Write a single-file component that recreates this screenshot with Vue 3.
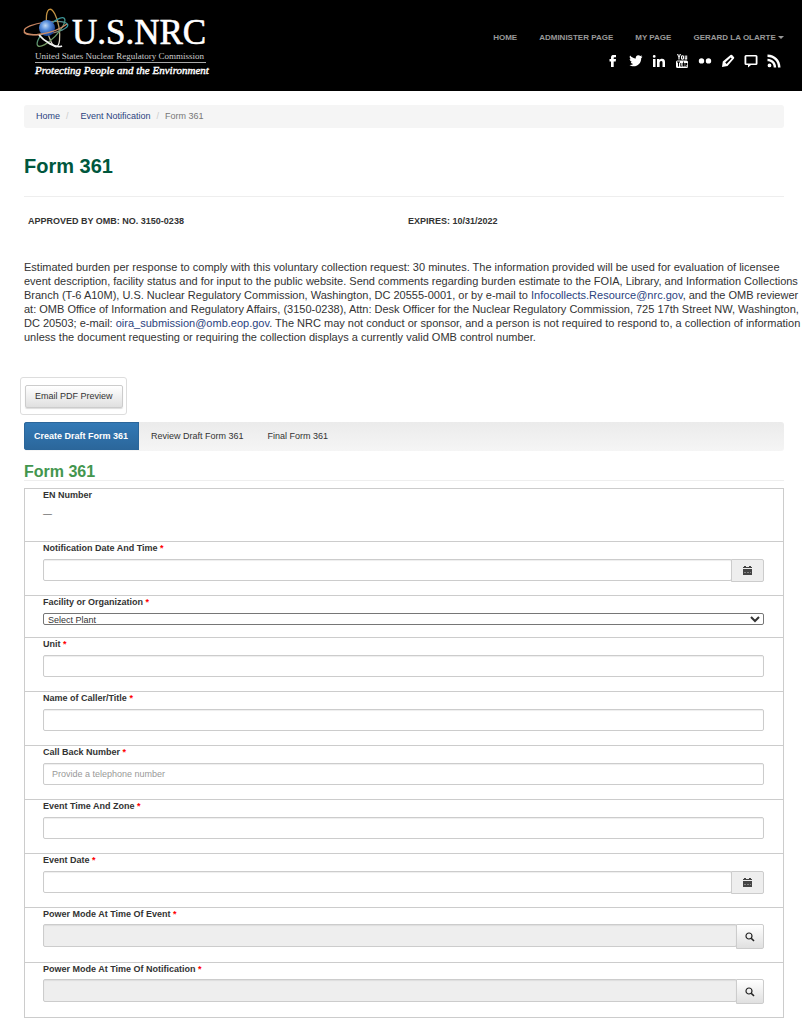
<template>
<header class="header">
  <a href="#" class="logo" aria-label="U.S.NRC home">
    <svg width="196" height="74" viewBox="0 0 196 74">
      <defs>
        <radialGradient id="globe" cx="0.4" cy="0.35" r="0.7">
          <stop offset="0" stop-color="#c3dbf7" />
          <stop offset="0.4" stop-color="#5a90dc" />
          <stop offset="1" stop-color="#12398c" />
        </radialGradient>
        <linearGradient id="orbitWide" x1="0" y1="0" x2="1" y2="0">
          <stop offset="0" stop-color="#d08a62" />
          <stop offset="0.6" stop-color="#a5705a" />
          <stop offset="1" stop-color="#2f9aa8" />
        </linearGradient>
        <linearGradient id="orbitTall" x1="0" y1="0" x2="0" y2="1">
          <stop offset="0" stop-color="#c9923a" />
          <stop offset="0.6" stop-color="#b09a6c" />
          <stop offset="1" stop-color="#f2f2f2" />
        </linearGradient>
        <linearGradient id="orbitTilt" x1="1" y1="0" x2="0" y2="1">
          <stop offset="0" stop-color="#2a93a6" />
          <stop offset="1" stop-color="#7f9a55" />
        </linearGradient>
      </defs>
      <g fill="none" stroke-width="1.3">
        <ellipse cx="30" cy="20" rx="22" ry="6" transform="rotate(-8 30 20)" stroke="url(#orbitWide)" />
        <ellipse cx="37" cy="20" rx="6" ry="19" transform="rotate(-10 37 20)" stroke="url(#orbitTall)" />
        <ellipse cx="35" cy="24" rx="19" ry="6" transform="rotate(-46 35 24)" stroke="url(#orbitTilt)" />
      </g>
      <circle cx="31" cy="20" r="8" fill="url(#globe)" />
      <g fill="none" stroke-width="1.3">
        <path d="M8 24 C11 30 38 26 51 16" stroke="#c98a66" />
        <path d="M23 27 C28 33 40 41 46 38" stroke="#f2f2f2" stroke-width="1.8" />
      </g>
      <text x="56" y="36" class="logo-name">U.S.NRC</text>
      <text x="19" y="51" class="logo-full">United States Nuclear Regulatory Commission</text>
      <path d="M19 54.500H190" stroke="#aaa" />
      <text x="19" y="66" class="logo-motto">Protecting People and the Environment</text>
    </svg>
  </a>
  <div class="header-right">
    <nav class="menu">
      <a href="#">HOME</a>
      <a href="#">ADMINISTER PAGE</a>
      <a href="#">MY PAGE</a>
      <a href="#">GERARD LA OLARTE <span class="caret"></span></a>
    </nav>
    <div class="social">
      <a v-for="icon in socialIcons" :key="icon.name" href="#" :aria-label="icon.name">
        <svg width="14" height="14" viewBox="0 0 14 14">
          <path :d="icon.d" fill="#fff" fill-rule="evenodd" />
        </svg>
      </a>
    </div>
  </div>
</header>

<main class="page">
  <nav class="breadcrumb">
    <a href="#">Home</a><span class="sep">/</span>
    <a href="#" class="second">Event Notification</a><span class="sep">/</span>
    <span class="current">Form 361</span>
  </nav>

  <h1>Form 361</h1>

  <div class="approval">
    <div>APPROVED BY OMB: NO. 3150-0238</div>
    <div>EXPIRES: 10/31/2022</div>
  </div>

  <p class="burden">
    Estimated burden per response to comply with this voluntary collection request: 30 minutes. The information provided will be used for evaluation of licensee event description, facility status and for input to the public website. Send comments regarding burden estimate to the FOIA, Library, and Information Collections Branch (T-6 A10M), U.S. Nuclear Regulatory Commission, Washington, DC 20555-0001, or by e-mail to <a href="mailto:Infocollects.Resource@nrc.gov">Infocollects.Resource@nrc.gov</a>, and the OMB reviewer at: OMB Office of Information and Regulatory Affairs, (3150-0238), Attn: Desk Officer for the Nuclear Regulatory Commission, 725 17th Street NW, Washington, DC 20503; e-mail: <a href="mailto:oira_submission@omb.eop.gov">oira_submission@omb.eop.gov</a>. The NRC may not conduct or sponsor, and a person is not required to respond to, a collection of information unless the document requesting or requiring the collection displays a currently valid OMB control number.
  </p>

  <div class="preview">
    <button type="button" class="btn">Email PDF Preview</button>
  </div>

  <div class="tabs">
    <button v-for="tab in tabs" :key="tab" type="button" :class="{ active: tab === activeTab }" @click="activeTab = tab">{{ tab }}</button>
  </div>

  <h2>Form 361</h2>

  <form class="fields" @submit.prevent>
    <div v-for="field in fields" :key="field.id" class="row" :class="field.type">
      <label :for="field.id">{{ field.label }} <span v-if="field.type !== 'static'" class="required">*</span></label>

      <output v-if="field.type === 'static'" :id="field.id">—</output>

      <select v-else-if="field.type === 'select'" :id="field.id" v-model="field.value">
        <option value="">Select Plant</option>
      </select>

      <div v-else class="group">
        <input :id="field.id" v-model="field.value" type="text" :placeholder="field.placeholder" :readonly="field.type === 'lookup'">
        <button v-if="field.type === 'date'" type="button" class="calendar" aria-label="Choose a date">
          <svg width="9" height="9" viewBox="0 0 9 9">
            <path d="M1 0h2v1h3V0h2v1h1v1H0V1h1z M0 3h9v6H0z" fill="#444" />
            <path d="M1 6.500h7" stroke="#888" stroke-dasharray="2 1" />
          </svg>
        </button>
        <button v-if="field.type === 'lookup'" type="button" class="search" aria-label="Launch lookup">
          <svg width="10" height="10" viewBox="0 0 10 10" fill="none" stroke="#222">
            <circle cx="4" cy="4" r="3" stroke-width="1.2" />
            <path d="M6.200 6.200L9 9" stroke-width="1.6" />
          </svg>
        </button>
      </div>
    </div>
  </form>
</main>
</template>

<script setup>
import { ref } from 'vue'

const tabs = ['Create Draft Form 361', 'Review Draft Form 361', 'Final Form 361']
const activeTab = ref(tabs[0])

const fields = ref([
  { id: 'en-number', type: 'static', label: 'EN Number' },
  { id: 'notification-date', type: 'date', label: 'Notification Date And Time', value: '' },
  { id: 'facility', type: 'select', label: 'Facility or Organization', value: '' },
  { id: 'unit', type: 'text', label: 'Unit', value: '' },
  { id: 'caller', type: 'text', label: 'Name of Caller/Title', value: '' },
  { id: 'call-back', type: 'text', label: 'Call Back Number', value: '', placeholder: 'Provide a telephone number' },
  { id: 'event-time', type: 'text', label: 'Event Time And Zone', value: '' },
  { id: 'event-date', type: 'date', label: 'Event Date', value: '' },
  { id: 'power-event', type: 'lookup', label: 'Power Mode At Time Of Event', value: '' },
  { id: 'power-notification', type: 'lookup', label: 'Power Mode At Time Of Notification', value: '' },
])

const socialIcons = [
  { name: 'Facebook', d: 'M5 13V7.500H3.500V5H5V3.500C5 1.600 6.200 1 7.600 1H10V3.200H8.500C7.900 3.200 7.700 3.500 7.700 4V5H10L9.700 7.500H7.700V13z' },
  { name: 'Twitter', d: 'M13.500 2.800L12.200 4.200C12.300 9 8.800 12.300 4.700 12.300C3 12.300 1.600 11.800.5 11C2 11.100 3.300 10.700 4.300 9.900C3 9.800 2.100 9 1.800 7.900H3C1.600 7.500.7 6.400.7 5L1.900 5.300C.7 4.400.3 2.900 1.100 1.600C2.600 3.400 4.500 4.400 6.800 4.500C6.400 2.700 7.600 1.200 9.300 1.200C10.200 1.200 10.800 1.500 11.300 2.100L13 1.500L12.300 2.900z' },
  { name: 'LinkedIn', d: 'M1 5H3.500V13H1z M2.250 1A1.400 1.400 0 1 1 2.200 3.800A1.400 1.400 0 0 1 2.250 1z M5 5H7.500V6.100C8.100 5.200 8.900 4.800 10 4.800C12.300 4.800 13 6.200 13 8.300V13H10.500V8.900C10.500 7.700 10.300 7 9.300 7C8.200 7 7.600 7.800 7.600 8.900V13H5z' },
  { name: 'YouTube', d: 'M2 0H3.200L4 2.200L4.800 0H6L4.600 3.300V5.500H3.400V3.300z M7.500 1.300C9 1.300 9 2 9 3.500C9 5 9 5.700 7.500 5.700C6 5.700 6 5 6 3.500C6 2 6 1.300 7.500 1.300zM7.500 2.300C7 2.300 7.100 3 7.100 3.500C7.100 4 7 4.700 7.500 4.700C8 4.700 7.900 4 7.900 3.500C7.900 3 8 2.300 7.500 2.300z M9.700 1.500H10.700V4.600H11.200V1.500H12.200V5.600H9.700z M2.500 6.500H11.500Q13 6.500 13 8V12.500Q13 14 11.500 14H2.500Q1 14 1 12.500V8Q1 6.500 2.500 6.500z M2 7.500V8.500H3V12.500H4V8.500H5V7.500z M5.300 9V12.500H7.500V9H6.800V11.700H6.100V9z M8 7.500V12.500H9.700V9H8.800V7.500z M10.200 9V12.500H12.300V11.500H11V11H12.300V9z' },
  { name: 'Flickr', d: 'M3.500 4.200A2.700 2.700 0 1 1 3.500 9.600A2.700 2.700 0 0 1 3.500 4.200z M10.500 4.200A2.700 2.700 0 1 1 10.500 9.600A2.700 2.700 0 0 1 10.500 4.200z' },
  { name: 'Blog', d: 'M9.500 1Q10.300.4 11.100 1.100L12.900 2.900Q13.600 3.700 13 4.500L6.500 12L1 13L1.800 7.500z M9.700 3.600L4.200 8.400L5.600 9.900L10.700 4.600z' },
  { name: 'Comments', d: 'M2 1H12Q13.500 1 13.500 2.500V9.500Q13.500 11 12 11H7L4 13.500V11H2Q.5 11 .5 9.500V2.500Q.5 1 2 1z M2.300 2.500V9.500H11.700V2.500z' },
  { name: 'RSS', d: 'M2.500 9.500A1.900 1.900 0 1 1 2.500 13.300A1.900 1.900 0 0 1 2.500 9.500z M.5 4.800C5.500 4.800 9.200 8.500 9.200 13.500H6.700C6.700 9.800 4.200 7.300.5 7.300z M.5.5C8 .5 13.500 6 13.500 13.500H11C11 7.400 6.600 3 .5 3z' },
]
</script>

<style>
body {
  margin: 0;
  background: #fff;
}
</style>

<style scoped>
.header,
.page {
  font-family: "Liberation Sans", Arial, sans-serif;
  font-size: 9px;
  line-height: 13px;
  color: #333;
}

a {
  color: #2b4380;
  text-decoration: none;
}

button,
input,
select {
  box-sizing: border-box;
  margin: 0;
  font: inherit;
  color: inherit;
}

.header {
  display: flex;
  justify-content: space-between;
  height: 91px;
  padding: 0 18px 0 16px;
  box-sizing: border-box;
  background: #000;
}

.logo {
  padding-top: 8px;
}

.logo svg,
.social svg {
  display: block;
}

.logo text {
  font-family: "Liberation Serif", serif;
  fill: #fff;
}

.logo .logo-name {
  font-size: 35px;
  stroke: #fff;
  stroke-width: 0.6px;
}

.logo .logo-full {
  font-size: 9px;
  fill: #ccc;
}

.logo .logo-motto {
  font-size: 11px;
  font-style: italic;
  stroke: #fff;
  stroke-width: 0.4px;
}

.header-right {
  display: flex;
  flex-direction: column;
  align-items: flex-end;
  gap: 10px;
  padding-top: 31px;
}

.menu {
  display: flex;
  gap: 22px;
  font-size: 8px;
  font-weight: bold;
}

.menu a {
  color: #999;
}

.caret {
  display: inline-block;
  vertical-align: middle;
  border: 3px solid transparent;
  border-top-color: #999;
  border-bottom: 0;
}

.social {
  display: flex;
  gap: 9px;
  padding-right: 3px;
}

.page {
  padding: 14px 18px 10px 24px;
}

.breadcrumb {
  display: flex;
  padding: 5px 12px;
  border-radius: 3px;
  background: #f5f5f5;
}

.sep {
  padding: 0 6px;
  color: #ccc;
}

.second {
  padding-left: 6px;
}

.current {
  color: #777;
}

h1 {
  margin: 24px 0 16px;
  padding-bottom: 16px;
  border-bottom: 1px solid #eee;
  font-size: 20px;
  line-height: 28px;
  color: #00573d;
}

.approval {
  display: grid;
  grid-template-columns: 1fr 1fr;
  font-weight: bold;
}

.approval div {
  padding: 2px 4px;
}

.burden {
  margin: 30px -17px 33px 0;
  font-size: 11px;
  line-height: 14px;
}

.preview {
  width: fit-content;
  margin-left: -4px;
  padding: 7px 3px 6px 4px;
  border: 1px solid #ddd;
  border-radius: 3px;
}

.btn {
  display: block;
  height: 23px;
  padding: 0 9px;
  border: 1px solid #ccc;
  border-radius: 2px;
  background: linear-gradient(#fff, #e0e0e0);
  box-shadow: 0 1px 1px #ddd;
}

.tabs {
  display: flex;
  margin-top: 7px;
  border-radius: 3px;
  background: linear-gradient(#ebebeb, #f5f5f5);
}

.tabs button {
  height: 28px;
  margin-bottom: 1px;
  padding: 0 12px;
  border: 0;
  background: none;
}

.tabs .active {
  padding: 0 11px 0 10px;
  border-radius: 3px 0 0 3px;
  background: linear-gradient(#337ab7, #2b669a);
  box-shadow: inset 0 0 0 1px #2b669a;
  font-weight: bold;
  color: #fff;
}

h2 {
  margin: 12px 0 7px;
  border-bottom: 1px solid #eee;
  font-size: 16px;
  line-height: 17px;
  color: #43964e;
}

.fields {
  border: solid #ccc;
  border-width: 0 1px 1px;
}

.row {
  display: flex;
  flex-direction: column;
  height: 54px;
  box-sizing: border-box;
  padding: 0 19px 0 18px;
  border-top: 1px solid #ccc;
}

.row.static {
  height: 53px;
}

.row.select {
  height: 42px;
}

.row.lookup {
  height: 55px;
}

label {
  margin-bottom: 4px;
  font-weight: bold;
}

.lookup label {
  margin-bottom: 3px;
}

output {
  padding-top: 2px;
}

.required {
  color: #f00;
}

.group {
  display: flex;
  align-items: flex-start;
}

input {
  flex: 1;
  min-width: 0;
  height: 22px;
  padding: 0 8px;
  border: 1px solid #ccc;
  border-radius: 2px;
  background: #fff;
  box-shadow: inset 0 1px 1px #eee;
}

input::placeholder {
  color: #999;
}

input:read-only {
  height: 23px;
  background: #eee;
  box-shadow: inset 0 1px 1px #ddd;
}

select {
  height: 12px;
  padding: 0;
  border: 1px solid #767676;
  border-radius: 2px;
  background: #fff;
  line-height: 10px;
}

.calendar,
.search {
  display: flex;
  align-items: center;
  justify-content: center;
  height: 23px;
  padding: 0;
  border: 1px solid #ccc;
  border-radius: 0 2px 2px 0;
}

.calendar {
  width: 33px;
  margin-left: -1px;
  background: #eee;
}

.search {
  width: 28px;
  height: 25px;
  margin-left: -1px;
  background: linear-gradient(#fff, #e0e0e0);
}
</style>
